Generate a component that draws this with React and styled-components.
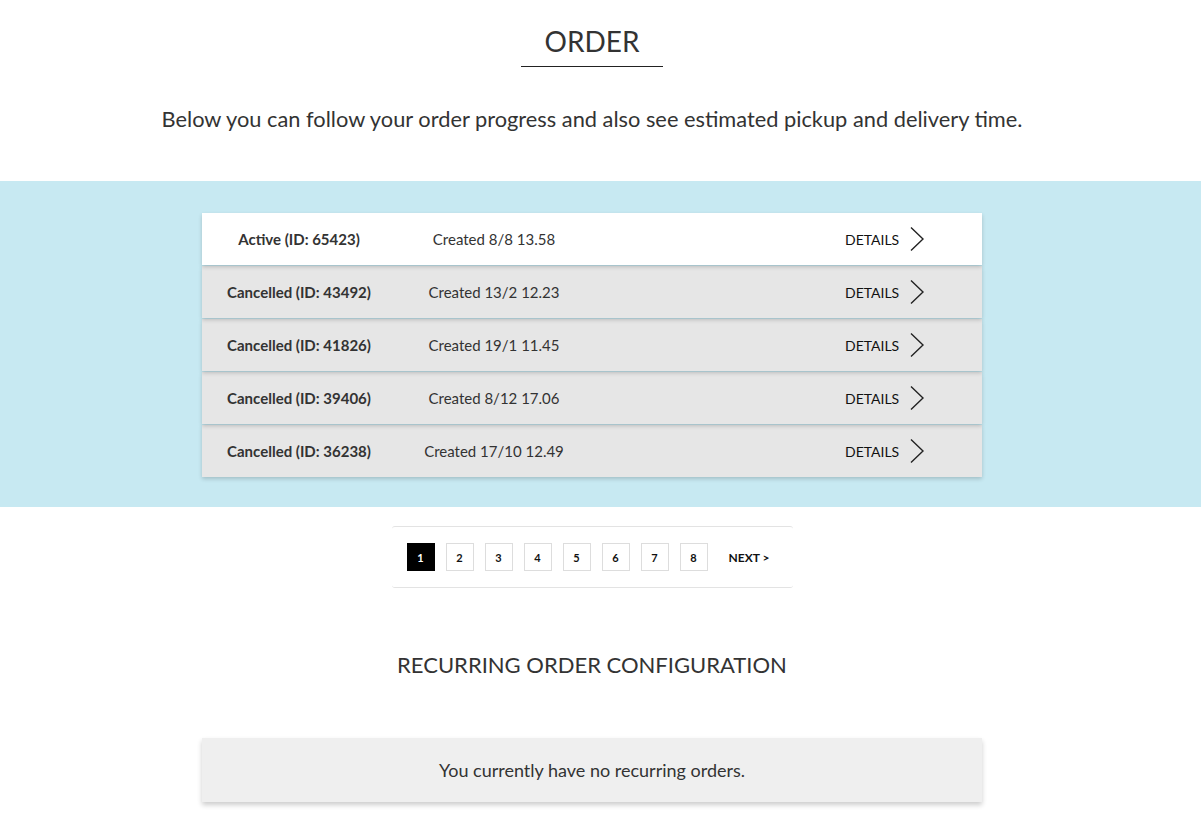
import React from "react"
import styled, { createGlobalStyle } from "styled-components"

const GlobalStyle = createGlobalStyle`
  body {
    margin: 0;
    background: #fff;
    font-family: Lato, "Open Sans", sans-serif;
    color: #333;
  }
`

const Page = styled.div`
  padding-right: 17px;
  display: flex;
  flex-direction: column;
  align-items: center;
`

const Title = styled.h1`
  margin: 25px 0 0;
  padding: 0 24px 9px;
  border-bottom: 1px solid #222;
  font-size: 28px;
  font-weight: 400;
  line-height: 32px;
  color: #333;
`

const Lead = styled.p`
  margin: 39px 0 0;
  font-size: 21.8px;
  line-height: 26px;
  color: #333;
`

const Band = styled.section`
  align-self: stretch;
  margin: 49px -17px 0 0;
  padding: 32px 17px 30px 0;
  background: #c7e9f2;
  display: flex;
  justify-content: center;
`

const List = styled.div`
  width: 780px;
  display: flex;
  flex-direction: column;
  gap: 1px;
`

const Row = styled.div`
  height: 52px;
  display: grid;
  grid-template-columns: 194px 196px 1fr 137px;
  align-items: center;
  background: ${(p) => (p.$active ? "#fff" : "#e6e6e6")};
  box-shadow: 0 2px 4px rgba(0, 0, 0, 0.18);
  position: relative;
  z-index: ${(p) => 10 - p.$index};
  font-size: 15px;
`

const Status = styled.span`
  text-align: center;
  font-weight: 700;
  color: #333;
`

const Created = styled.span`
  text-align: center;
  color: #333;
`

const Details = styled.a`
  grid-column: 4;
  display: flex;
  align-items: center;
  gap: 10px;
  font-size: 14px;
  color: #111;
  cursor: pointer;
`

const Pager = styled.nav`
  box-sizing: border-box;
  margin-top: 19px;
  width: 401px;
  height: 62px;
  padding: 0 0 0 15px;
  border-top: 1px solid #e3e3e3;
  border-bottom: 1px solid #e3e3e3;
  border-radius: 3px;
  display: flex;
  align-items: center;
  gap: 11px;
`

const PageButton = styled.span`
  width: 26px;
  height: 26px;
  display: flex;
  align-items: center;
  justify-content: center;
  border: 1px solid ${(p) => (p.$current ? "#000" : "#ddd")};
  background: ${(p) => (p.$current ? "#000" : "#fff")};
  color: ${(p) => (p.$current ? "#fff" : "#111")};
  font-size: 11px;
  font-weight: 700;
`

const Next = styled.span`
  margin-left: 10px;
  font-size: 12px;
  font-weight: 700;
  color: #111;
`

const SubTitle = styled.h2`
  margin: 64px 0 0;
  font-size: 22px;
  font-weight: 400;
  line-height: 26px;
  color: #333;
`

const Empty = styled.div`
  margin: 60px 0 30px;
  width: 780px;
  height: 64px;
  display: flex;
  align-items: center;
  justify-content: center;
  background: #efefef;
  box-shadow: 0 3px 5px rgba(0, 0, 0, 0.2);
  font-size: 18px;
  color: #333;
`

const Chevron = () => (
  <svg width="16" height="26" viewBox="0 0 16 26" fill="none">
    <path d="M2 1.5 L14 13 L2 24.5" stroke="#222" strokeWidth="1.4" />
  </svg>
)

const orders = [
  { status: "Active", id: 65423, created: "8/8 13.58" },
  { status: "Cancelled", id: 43492, created: "13/2 12.23" },
  { status: "Cancelled", id: 41826, created: "19/1 11.45" },
  { status: "Cancelled", id: 39406, created: "8/12 17.06" },
  { status: "Cancelled", id: 36238, created: "17/10 12.49" },
]

const pages = [1, 2, 3, 4, 5, 6, 7, 8]

export default function App() {
  return (
    <Page>
      <GlobalStyle />
      <Title>ORDER</Title>
      <Lead>
        Below you can follow your order progress and also see estimated pickup and delivery time.
      </Lead>
      <Band>
        <List>
          {orders.map((o, i) => (
            <Row key={o.id} $active={o.status === "Active"} $index={i}>
              <Status>
                {o.status} (ID: {o.id})
              </Status>
              <Created>Created {o.created}</Created>
              <Details>
                DETAILS
                <Chevron />
              </Details>
            </Row>
          ))}
        </List>
      </Band>
      <Pager>
        {pages.map((n) => (
          <PageButton key={n} $current={n === 1}>
            {n}
          </PageButton>
        ))}
        <Next>NEXT &gt;</Next>
      </Pager>
      <SubTitle>RECURRING ORDER CONFIGURATION</SubTitle>
      <Empty>You currently have no recurring orders.</Empty>
    </Page>
  )
}
